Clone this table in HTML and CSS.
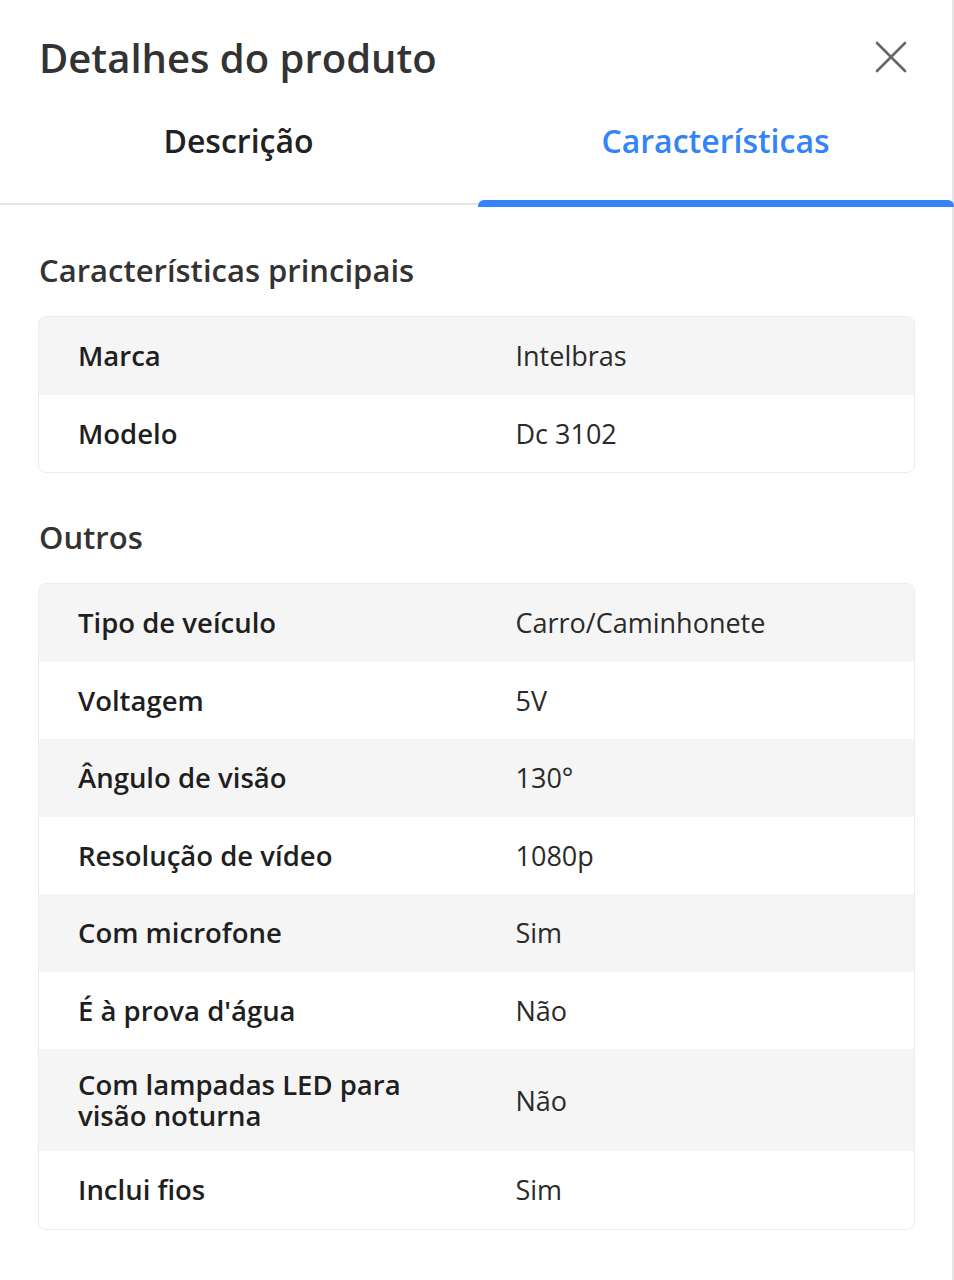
FILE: index.html
```html
<!DOCTYPE html>
<html lang="pt-BR">
<head>
<meta charset="utf-8">
<title>Detalhes do produto</title>
<link rel="stylesheet" href="styles.css">
</head>
<body>
<div class="sheet">
  <header class="head">
    <h1 class="title">Detalhes do produto</h1>
    <button class="close" aria-label="Fechar">
      <svg width="32" height="32" viewBox="0 0 32 32"><path d="M2 2 L30 30 M30 2 L2 30" stroke="#666" stroke-width="2.6" stroke-linecap="round" fill="none"/></svg>
    </button>
  </header>
  <nav class="tabs">
    <div class="tab">Descrição</div>
    <div class="tab active">Características</div>
  </nav>
  <main class="content">
    <h2 class="section-title">Características principais</h2>
    <div class="table">
      <div class="row shade"><div class="label">Marca</div><div class="value">Intelbras</div></div>
      <div class="row"><div class="label">Modelo</div><div class="value">Dc 3102</div></div>
    </div>
    <h2 class="section-title">Outros</h2>
    <div class="table">
      <div class="row shade"><div class="label">Tipo de veículo</div><div class="value">Carro/Caminhonete</div></div>
      <div class="row"><div class="label">Voltagem</div><div class="value">5V</div></div>
      <div class="row shade"><div class="label">Ângulo de visão</div><div class="value">130°</div></div>
      <div class="row"><div class="label">Resolução de vídeo</div><div class="value">1080p</div></div>
      <div class="row shade"><div class="label">Com microfone</div><div class="value">Sim</div></div>
      <div class="row"><div class="label">É à prova d'água</div><div class="value">Não</div></div>
      <div class="row shade"><div class="label">Com lampadas LED para visão noturna</div><div class="value">Não</div></div>
      <div class="row"><div class="label">Inclui fios</div><div class="value">Sim</div></div>
    </div>
  </main>
</div>
</body>
</html>
```

FILE: styles.css
```css
* { box-sizing: border-box; }
html, body { margin: 0; padding: 0; background: #fff; }
body {
  font-family: "Open Sans", "Liberation Sans", sans-serif;
  color: #333;
}
.sheet {
  width: 954px;
  min-height: 1280px;
  box-shadow: inset -2px 0 0 #e4e4e4;
}
.head {
  display: flex;
  align-items: center;
  justify-content: space-between;
  padding: 28px 47px 0 39px;
  height: 86px;
}
.title {
  margin: 0;
  font-size: 40px;
  font-weight: 600;
  color: #333;
}
.close {
  border: 0;
  background: none;
  padding: 0;
  width: 32px;
  height: 32px;
  display: flex;
}
.tabs {
  display: grid;
  grid-template-columns: 1fr 1fr;
  border-bottom: 2px solid #e6e6e6;
  height: 119px;
}
.tab {
  display: flex;
  align-items: center;
  justify-content: center;
  font-size: 32px;
  font-weight: 600;
  color: #222;
  padding-bottom: 8px;
  position: relative;
}
.tab.active { color: #3483fa; }
.tab.active::after {
  content: "";
  position: absolute;
  left: 1px;
  right: 0;
  bottom: -4px;
  height: 7px;
  background: #3483fa;
  border-radius: 6px 6px 0 0;
}
.content {
  padding: 45px 39px 0 38px;
}
.section-title {
  margin: 0 0 26px 1px;
  font-size: 31px;
  font-weight: 600;
  color: #333;
  line-height: 40px;
}
.table {
  border: 1px solid #ececec;
  border-radius: 8px;
  overflow: hidden;
  margin-bottom: 44px;
}
.row {
  display: grid;
  grid-template-columns: 1fr 1fr;
  align-items: center;
  min-height: 77.5px;
}
.row.shade { background: #f5f5f5; }
.label, .value {
  padding: 20px 40px 20px 39px;
  font-size: 27.5px;
  line-height: 31px;
  color: #1f1f1f;
}
.label { font-weight: 600; }
.value { font-weight: 400; color: #2a2a2a; font-size: 27px; padding-left: 39px; }
```
